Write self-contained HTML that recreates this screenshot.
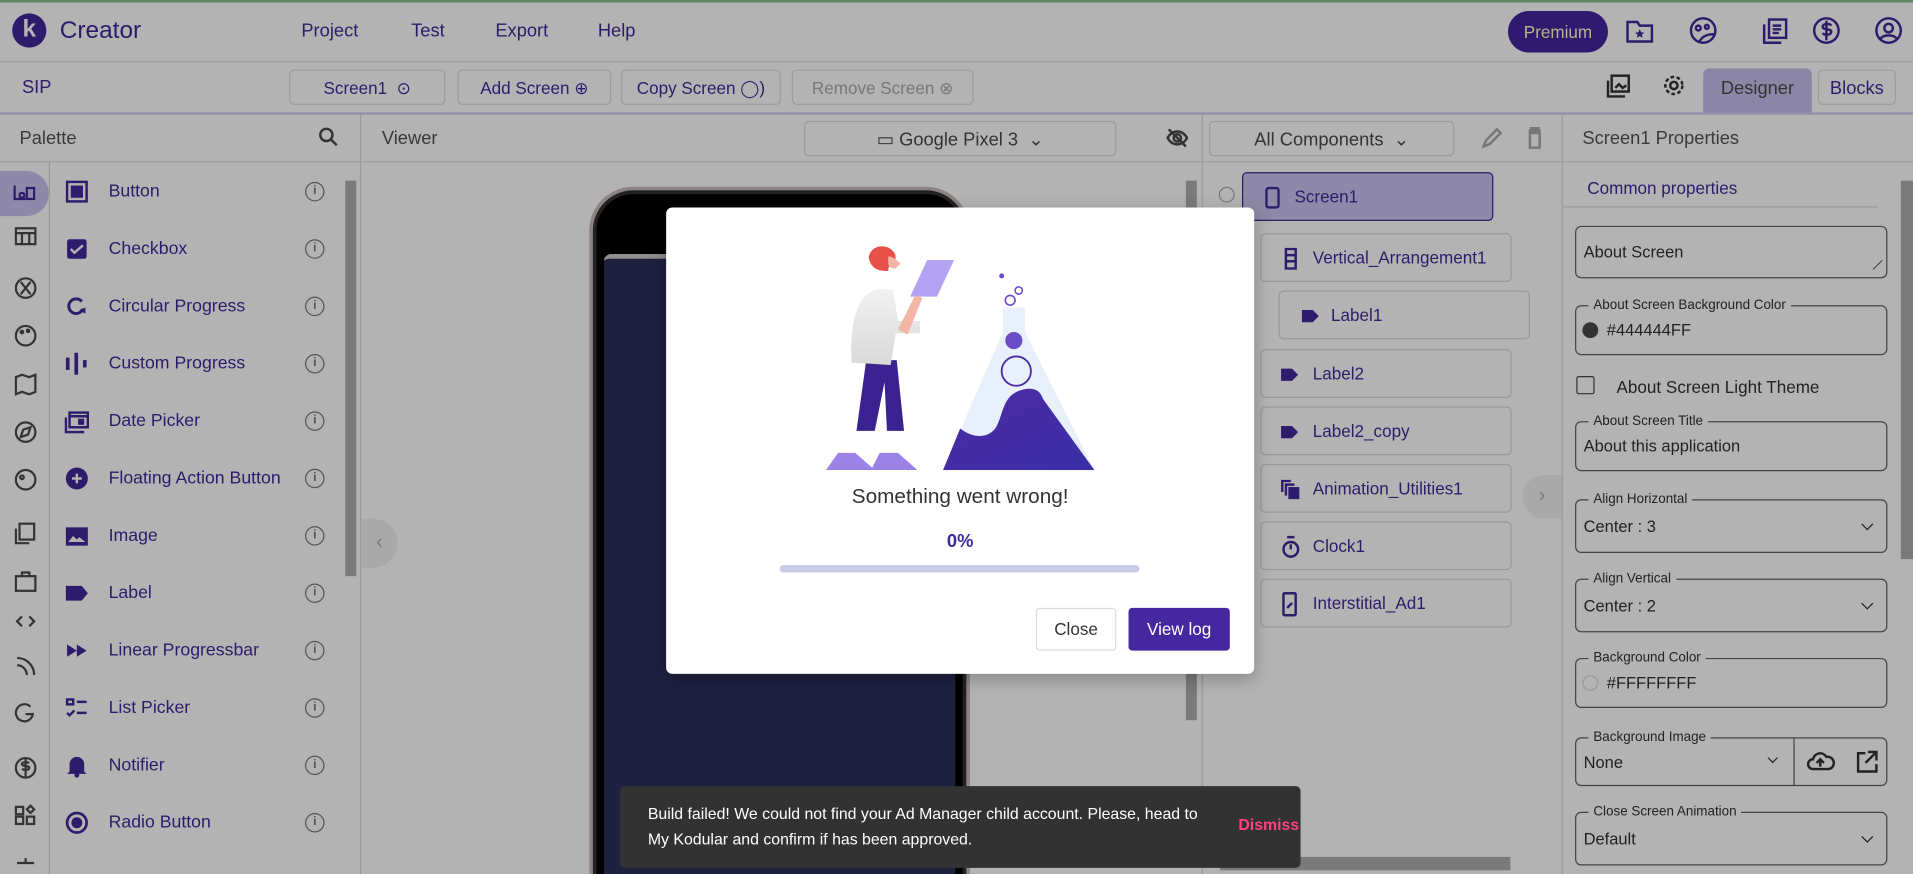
<!DOCTYPE html>
<html><head><meta charset="utf-8">
<style>
*{box-sizing:border-box;margin:0;padding:0}
html,body{width:1913px;height:874px;overflow:hidden;background:#b3b3b3}
#w{position:absolute;left:0;top:0;width:1568px;height:716px;transform:scale(1.22003,1.2207);transform-origin:0 0;background:#b3b3b3;font-family:"Liberation Sans",sans-serif;color:#2d1b6b;overflow:hidden}
.a{position:absolute}
.t{position:absolute;white-space:nowrap}
.p{color:#2d1b6b}
.g{color:#3a3a3a}
.btn{position:absolute;border:1px solid #9c9c9c;border-radius:4px;font-size:14px;text-align:center;line-height:27px}
.item{position:absolute;left:40px;width:243px;height:47px}
.item .ic{position:absolute;left:13px;top:14px;width:20px;height:20px}
.item .l{position:absolute;left:49px;top:16px;font-size:14.5px;color:#2d1b6b}
.item .i{position:absolute;left:210px;top:16px;width:16px;height:16px;border:1.5px solid #555;border-radius:50%;font-size:10px;line-height:13px;text-align:center;color:#555;font-weight:bold}
.comp{position:absolute;height:40px;border:1px solid #999;border-radius:4px;font-size:14px;line-height:38px}
.comp span{position:absolute;left:42px}
.fs{position:absolute;left:1291px;width:256px;border:1px solid #444;border-radius:5px}
.fs .lb{position:absolute;left:10px;top:-8px;background:#b3b3b3;padding:0 4px;font-size:11px;color:#222;line-height:14px}
.fs .v{position:absolute;left:6px;font-size:13.5px;color:#222}
.chev{position:absolute;right:12px;width:7px;height:7px;border-right:1.6px solid #222;border-bottom:1.6px solid #222;transform:rotate(45deg)}
</style></head><body><div id="w">
<div class="a" style="left:0;top:0;width:1568px;height:2px;background:#5b8a5e"></div>
<div class="a" style="left:10px;top:11px;width:28px;height:28px;border-radius:50%;background:#2d1b6b;color:#b3b3b3;font-weight:bold;font-size:20px;text-align:center;line-height:27px">k</div>
<div class="t" style="left:49px;top:14px;font-size:20px;color:#2d1b6b">Creator</div>
<div class="t" style="left:247px;top:17px;font-size:15px">Project</div>
<div class="t" style="left:337px;top:17px;font-size:15px">Test</div>
<div class="t" style="left:406px;top:17px;font-size:15px">Export</div>
<div class="t" style="left:490px;top:17px;font-size:15px">Help</div>
<div class="a" style="left:1236px;top:9px;width:82px;height:34px;border-radius:17px;background:#2e1a6e;color:#b9b48a;font-size:14px;text-align:center;line-height:34px">Premium</div>
<svg class="a" style="left:1330px;top:13px" width="230" height="26" viewBox="0 0 230 26" fill="none" stroke="#2d1b6b" stroke-width="2">
<path d="M4 5h8l2 3h10v13H4z"/><path d="M14 11l1.2 2.5 2.6.2-2 1.7.6 2.6-2.4-1.4-2.4 1.4.6-2.6-2-1.7 2.6-.2z" fill="#2d1b6b" stroke="none"/>
<circle cx="66" cy="12" r="10"/><circle cx="62" cy="10" r="2"/><circle cx="69" cy="9" r="1.6"/><path d="M63 21c2-4 6-6 12-6" />
<rect x="120" y="3" width="14" height="15"/><path d="M116 7v15h14M123 8h7M123 11h7M123 14h5"/>
<circle cx="167" cy="12" r="10"/><path d="M171 8c-1-2-7-2-7 1s7 1 7 4-6 3-7 1M167 4v16"/>
<circle cx="218" cy="12" r="10"/><circle cx="218" cy="10" r="3.5"/><path d="M211 19c3-4 11-4 14 0"/>
</svg>
<div class="a" style="left:0;top:50px;width:1568px;height:1px;background:#9d9d9d"></div>
<div class="t" style="left:18px;top:63px;font-size:15px">SIP</div>
<div class="btn p" style="left:237px;top:57px;width:128px;height:29px;line-height:29px">Screen1 &nbsp;⊙</div>
<div class="btn p" style="left:375px;top:57px;width:126px;height:29px;line-height:29px">Add Screen ⊕</div>
<div class="btn p" style="left:509px;top:57px;width:131px;height:29px;line-height:29px">Copy Screen ◯)</div>
<div class="btn" style="left:649px;top:57px;width:149px;height:29px;line-height:29px;color:#777">Remove Screen ⊗</div>
<svg class="a" style="left:1316px;top:60px" width="70" height="22" fill="none" stroke="#222" stroke-width="2"><rect x="5" y="2" width="14" height="13"/><path d="M2 6v13h14M8 12l3-3 3 3 3-2"/><circle cx="56" cy="10" r="3"/><circle cx="56" cy="10" r="7" stroke-dasharray="3 2"/></svg>
<div class="a" style="left:1396px;top:56px;width:89px;height:37px;background:#8c86a6;border-radius:5px 5px 0 0;font-size:15px;color:#333;text-align:center;line-height:34px">Designer</div>
<div class="btn p" style="left:1490px;top:57px;width:64px;height:29px;font-size:15px;line-height:29px">Blocks</div>
<div class="a" style="left:0;top:92px;width:1568px;height:2px;background:#938eac"></div>
<div class="t g" style="left:16px;top:105px;font-size:15px">Palette</div>
<svg class="a" style="left:261px;top:104px" width="16" height="16" fill="none" stroke="#333" stroke-width="2"><circle cx="6.5" cy="6.5" r="5"/><path d="M10 10l5 5"/></svg>
<div class="a" style="left:295px;top:94px;width:1px;height:622px;background:#999"></div>
<div class="t g" style="left:313px;top:105px;font-size:15px">Viewer</div>
<div class="btn" style="left:659px;top:99px;width:256px;height:29px;line-height:29px;color:#333;font-size:15px">▭ Google Pixel 3 &nbsp;⌄</div>
<svg class="a" style="left:955px;top:103px" width="20" height="20" fill="none" stroke="#333" stroke-width="2"><path d="M2 10c4-7 12-7 16 0-4 7-12 7-16 0z"/><circle cx="10" cy="10" r="3"/><path d="M3 3l14 14"/></svg>
<div class="a" style="left:985px;top:94px;width:1px;height:622px;background:#999"></div>
<div class="btn" style="left:991px;top:99px;width:201px;height:29px;line-height:29px;color:#333;font-size:15px">All Components &nbsp;⌄</div>
<svg class="a" style="left:1213px;top:103px" width="60" height="20" fill="none" stroke="#777" stroke-width="2"><path d="M3 17l2-5 9-9 3 3-9 9z"/><path d="M40 4h10M42 4v-2h6v2M41 6h8v12h-8z"/></svg>
<div class="a" style="left:1280px;top:94px;width:1px;height:622px;background:#999"></div>
<div class="t g" style="left:1297px;top:105px;font-size:15px">Screen1 Properties</div>
<div class="a" style="left:0;top:132px;width:1568px;height:1px;background:#9d9d9d"></div>
<!-- palette sidebar -->
<div class="a" style="left:0;top:140px;width:40px;height:37px;background:#8f89a9;border-radius:0 20px 20px 0"></div>
<svg class="a" style="left:11px;top:151px" width="18" height="14" fill="none" stroke="#2d1b6b" stroke-width="1.8"><path d="M1 1v11h9"/><circle cx="7" cy="9" r="2"/><rect x="11" y="3" width="6" height="9"/></svg>
<div class="a" style="left:40px;top:133px;width:1px;height:583px;background:#999"></div>
<div class="a" style="left:12px;top:179px;font-size:0">
<svg width="18" height="540" fill="none" stroke="#333" stroke-width="1.8">
<rect x="1" y="8" width="16" height="13"/><path d="M1 12h16M6 12v9M12 12v9"/>
<circle cx="9" cy="57" r="8"/><path d="M5 52l8 10M13 52l-8 10"/>
<circle cx="9" cy="96" r="8"/><circle cx="6" cy="93" r="1"/><circle cx="11" cy="92" r="1"/>
<path d="M1 130l5-2 6 2 5-2v14l-5 2-6-2-5 2z"/>
<circle cx="9" cy="175" r="8"/><path d="M5 179l2-6 6-2-2 6z"/>
<circle cx="9" cy="214" r="8"/><circle cx="6" cy="212" r="1.5"/>
<rect x="4" y="250" width="12" height="13"/><path d="M1 254v12h11"/>
<rect x="1" y="293" width="16" height="12"/><path d="M6 293v-3h6v3"/>
<path d="M6 326l-4 4 4 4M12 326l4 4-4 4"/>
<path d="M2 360a14 14 0 0 1 14 14M2 366a8 8 0 0 1 8 8"/>
<path d="M15 405a7 7 0 1 1-2-5M9 406h6"/>
<circle cx="9" cy="450" r="8"/><path d="M12 446c-2-1-6-1-6 1s6 1 6 3-4 2-6 1M9 442v16"/>
<rect x="1" y="482" width="6" height="6"/><rect x="1" y="490" width="6" height="6"/><rect x="10" y="490" width="6" height="6"/><path d="M13 481l3 3-3 3-3-3z"/>
<path d="M2 528h14M9 524v4"/>
</svg></div>
<div class="item" style="top:133px"><svg class="ic" viewBox="0 0 20 20"><rect x="2" y="2" width="16" height="16" fill="none" stroke="#2d1b6b" stroke-width="2"/><rect x="5" y="5" width="10" height="10" fill="#2d1b6b"/></svg><div class="l">Button</div><div class="i">i</div></div>
<div class="item" style="top:180px"><svg class="ic" viewBox="0 0 20 20"><rect x="2" y="2" width="16" height="16" rx="2" fill="#2d1b6b"/><path d="M5 10l3 3 7-6" stroke="#b3b3b3" stroke-width="2" fill="none"/></svg><div class="l">Checkbox</div><div class="i">i</div></div>
<div class="item" style="top:227px"><svg class="ic" viewBox="0 0 20 20"><path d="M15 12a6 6 0 1 1-1-6" fill="none" stroke="#2d1b6b" stroke-width="2.4"/><path d="M12 13l5-2 0 5z" fill="#2d1b6b"/></svg><div class="l">Circular Progress</div><div class="i">i</div></div>
<div class="item" style="top:274px"><svg class="ic" viewBox="0 0 20 20" fill="#2d1b6b"><rect x="1" y="5" width="3" height="10"/><rect x="8" y="1" width="3" height="18"/><rect x="15" y="7" width="3" height="6"/></svg><div class="l">Custom Progress</div><div class="i">i</div></div>
<div class="item" style="top:321px"><svg class="ic" viewBox="0 0 20 20" fill="none" stroke="#2d1b6b" stroke-width="2"><rect x="4" y="3" width="15" height="12"/><path d="M1 7v12h15"/><rect x="12" y="9" width="3" height="3" fill="#2d1b6b"/><path d="M4 6h15"/></svg><div class="l">Date Picker</div><div class="i">i</div></div>
<div class="item" style="top:368px"><svg class="ic" viewBox="0 0 20 20"><circle cx="10" cy="10" r="9" fill="#2d1b6b"/><path d="M10 6v8M6 10h8" stroke="#b3b3b3" stroke-width="2"/></svg><div class="l">Floating Action Button</div><div class="i">i</div></div>
<div class="item" style="top:415px"><svg class="ic" viewBox="0 0 20 20"><rect x="1" y="3" width="18" height="15" fill="#2d1b6b"/><path d="M3 15l4-5 3 3 2-2 5 4z" fill="#b3b3b3"/></svg><div class="l">Image</div><div class="i">i</div></div>
<div class="item" style="top:462px"><svg class="ic" viewBox="0 0 20 20"><path d="M1 4h13l5 6-5 6H1z" fill="#2d1b6b"/></svg><div class="l">Label</div><div class="i">i</div></div>
<div class="item" style="top:509px"><svg class="ic" viewBox="0 0 20 20" fill="#2d1b6b"><path d="M2 5l8 5-8 5zM10 5l8 5-8 5z"/></svg><div class="l">Linear Progressbar</div><div class="i">i</div></div>
<div class="item" style="top:556px"><svg class="ic" viewBox="0 0 20 20" fill="none" stroke="#2d1b6b" stroke-width="2"><rect x="2" y="3" width="5" height="4"/><path d="M10 5h8M2 14l2 2 4-4M10 14h8"/></svg><div class="l">List Picker</div><div class="i">i</div></div>
<div class="item" style="top:603px"><svg class="ic" viewBox="0 0 20 20" fill="#2d1b6b"><path d="M4 15V9a6 6 0 0 1 12 0v6l2 2H2z"/><circle cx="10" cy="18" r="2"/></svg><div class="l">Notifier</div><div class="i">i</div></div>
<div class="item" style="top:650px"><svg class="ic" viewBox="0 0 20 20"><circle cx="10" cy="10" r="8" fill="none" stroke="#2d1b6b" stroke-width="2.2"/><circle cx="10" cy="10" r="4.5" fill="#2d1b6b"/></svg><div class="l">Radio Button</div><div class="i">i</div></div>
<div class="a" style="left:283px;top:148px;width:9px;height:324px;background:#7a7a7a"></div>
<!-- viewer -->
<div class="a" style="left:296px;top:425px;width:30px;height:40px;background:#a9a9a9;border-radius:0 20px 20px 0;color:#777;font-size:16px;line-height:40px;text-align:center">‹</div>
<div class="a" style="left:483px;top:153px;width:312px;height:600px;border-radius:36px;background:#000;border:3px solid #8c8483;box-shadow:inset 0 0 0 3px #222"></div>
<div class="a" style="left:495px;top:208px;width:288px;height:510px;background:#1e2040;border-top:4px solid #8e8e8e;border-radius:6px 6px 0 0"></div>
<div class="a" style="left:972px;top:148px;width:9px;height:442px;background:#7a7a7a"></div>
<!-- components -->
<div class="a" style="left:999px;top:153px;width:13px;height:13px;border:1.4px solid #777;border-radius:50%"></div>
<div class="comp p" style="left:1018px;top:141px;width:206px;background:#8f89a9;border-color:#2d1b6b"><svg class="a" style="left:18px;top:11px" width="12" height="18" fill="none" stroke="#2d1b6b" stroke-width="2"><rect x="1" y="1" width="10" height="16" rx="2"/></svg><span>Screen1</span></div>
<div class="comp p" style="left:1033px;top:191px;width:206px"><svg class="a" style="left:18px;top:11px" width="12" height="18" fill="none" stroke="#2d1b6b" stroke-width="2"><rect x="2" y="1" width="8" height="16"/><path d="M2 6h8M2 11h8"/></svg><span>Vertical_Arrangement1</span></div>
<div class="comp p" style="left:1048px;top:238px;width:206px"><svg class="a" style="left:18px;top:14px" width="14" height="12"><path d="M0 1h9l5 5-5 5H0z" fill="#2d1b6b"/></svg><span>Label1</span></div>
<div class="comp p" style="left:1033px;top:286px;width:206px"><svg class="a" style="left:16px;top:14px" width="14" height="12"><path d="M0 1h9l5 5-5 5H0z" fill="#2d1b6b"/></svg><span>Label2</span></div>
<div class="comp p" style="left:1033px;top:333px;width:206px"><svg class="a" style="left:16px;top:14px" width="14" height="12"><path d="M0 1h9l5 5-5 5H0z" fill="#2d1b6b"/></svg><span>Label2_copy</span></div>
<div class="comp p" style="left:1033px;top:380px;width:206px"><svg class="a" style="left:16px;top:12px" width="16" height="16" fill="#2d1b6b"><path d="M0 0h8v2H2v8H0z"/><path d="M3 3h8v2H5v8H3z"/><rect x="6" y="6" width="9" height="10"/></svg><span>Animation_Utilities1</span></div>
<div class="comp p" style="left:1033px;top:427px;width:206px"><svg class="a" style="left:16px;top:10px" width="16" height="20" fill="none" stroke="#2d1b6b" stroke-width="2"><circle cx="8" cy="12" r="6"/><path d="M5 2h6M8 12V8"/></svg><span>Clock1</span></div>
<div class="comp p" style="left:1033px;top:474px;width:206px"><svg class="a" style="left:16px;top:10px" width="14" height="20" fill="none" stroke="#2d1b6b" stroke-width="2"><rect x="2" y="1" width="10" height="18" rx="1"/><path d="M5 13l4-4"/></svg><span>Interstitial_Ad1</span></div>
<div class="a" style="left:1248px;top:389px;width:32px;height:36px;background:#a9a9a9;border-radius:18px 0 0 18px;color:#777;font-size:16px;line-height:36px;text-align:center">›</div>
<div class="a" style="left:1000px;top:702px;width:238px;height:11px;background:#7a7a7a"></div>
<!-- properties -->
<div class="t p" style="left:1301px;top:146px;font-size:14px">Common properties</div>
<div class="a" style="left:1281px;top:169px;width:258px;height:1px;background:#999"></div>
<div class="a" style="left:1558px;top:148px;width:10px;height:310px;background:#7a7a7a"></div>
<div class="fs" style="top:185px;height:43px"><div class="v" style="top:13px">About Screen</div><div class="a" style="right:3px;bottom:6px;width:8px;height:8px;background:linear-gradient(135deg,transparent 45%,#444 45%,#444 55%,transparent 55%)"></div></div>
<div class="fs" style="top:250px;height:41px"><div class="lb">About Screen Background Color</div><div class="a" style="left:5px;top:13px;width:13px;height:13px;border-radius:50%;background:#333"></div><div class="v" style="left:25px;top:12px">#444444FF</div></div>
<div class="a" style="left:1292px;top:308px;width:15px;height:15px;border:1.6px solid #333;border-radius:2px"></div>
<div class="t" style="left:1325px;top:309px;font-size:14px;color:#222">About Screen Light Theme</div>
<div class="fs" style="top:345px;height:41px"><div class="lb">About Screen Title</div><div class="v" style="top:12px">About this application</div></div>
<div class="fs" style="top:409px;height:44px"><div class="lb">Align Horizontal</div><div class="v" style="top:14px">Center : 3</div><div class="chev" style="top:16px"></div></div>
<div class="fs" style="top:474px;height:44px"><div class="lb">Align Vertical</div><div class="v" style="top:14px">Center : 2</div><div class="chev" style="top:16px"></div></div>
<div class="fs" style="top:539px;height:41px"><div class="lb">Background Color</div><div class="a" style="left:5px;top:13px;width:13px;height:13px;border-radius:50%;border:1px solid #999"></div><div class="v" style="left:25px;top:12px">#FFFFFFFF</div></div>
<div class="fs" style="top:604px;height:40px"><div class="lb">Background Image</div><div class="v" style="top:12px">None</div><div class="chev" style="right:90px;top:13px;width:6px;height:6px;border-width:1.3px"></div><div class="a" style="left:178px;top:0;width:1px;height:39px;background:#444"></div>
<svg class="a" style="left:189px;top:9px" width="70" height="20" fill="none" stroke="#222" stroke-width="2"><path d="M5 16a4 4 0 0 1 0-8 6 6 0 0 1 11-2 4 4 0 0 1 2 10z"/><path d="M11 14V9M8 11l3-3 3 3"/><path d="M48 3h-6v15h15v-6M50 2h7v7M57 2l-9 9"/></svg></div>
<div class="fs" style="top:665px;height:44px"><div class="lb">Close Screen Animation</div><div class="v" style="top:14px">Default</div><div class="chev" style="top:16px"></div></div>
<!-- modal -->
<div class="a" style="left:546px;top:170px;width:482px;height:382px;background:#fff;border-radius:5px;box-shadow:0 4px 14px rgba(0,0,0,.25)"></div>
<svg class="a" style="left:672px;top:185px" width="230" height="205" viewBox="0 0 230 205">
<defs><linearGradient id="f" x1="0" y1="0" x2="1" y2="1"><stop offset="0" stop-color="#4d2aa3"/><stop offset="1" stop-color="#3a2fa8"/></linearGradient>
<linearGradient id="c" x1="0" y1="0" x2="0" y2="1"><stop offset="0" stop-color="#f2f2f2"/><stop offset="1" stop-color="#d8d8d8"/></linearGradient></defs>
<path d="M150 67h18v20l57 113H101l49-113z" fill="#e8f0fc"/>
<path d="M101 200l14-34c10 8 24 9 30-2 6-12 5-26 22-30 10-2 14 2 16 8l42 58z" fill="url(#f)"/>
<circle cx="159" cy="94" r="7" fill="#6a4cc7"/><circle cx="161" cy="119" r="12" fill="none" stroke="#4d2aa3" stroke-width="1.5"/>
<circle cx="149" cy="41" r="2" fill="#6a4cc7"/><circle cx="163" cy="53" r="3" fill="none" stroke="#6a4cc7" stroke-width="1.3"/><circle cx="156" cy="61" r="4" fill="none" stroke="#6a4cc7" stroke-width="1.3"/>
<path d="M30 168l8-58h25l6 58-14 0-2-40-8 40z" fill="#3a2290"/>
<path d="M26 112c-2-40 8-60 24-60h10l4 26h18v10H62v2l-4 24z" fill="url(#c)"/>
<path d="M5 200l10-14h14l16 14zM42 200l7-14h15l16 14z" fill="#9a82e6"/>
<path d="M40 26c2-12 18-12 22-2l0 6c-4 0-6 3-6 7-10 0-14-3-16-11z" fill="#e8504a"/>
<path d="M56 25c4 0 8 4 10 6l-4 4c-4 0-6-2-6-4z" fill="#f2b6a6"/>
<path d="M74 58l14-30 22 0-14 30z" fill="#b3a3f2"/>
<path d="M64 85l14-28 6 2-12 30z" fill="#f2b6a6"/>
</svg>
<div class="t" style="left:546px;width:482px;text-align:center;top:397px;font-size:17px;color:#333">Something went wrong!</div>
<div class="t" style="left:546px;width:482px;text-align:center;top:435px;font-size:15px;color:#3d2a9a;font-weight:bold">0%</div>
<div class="a" style="left:639px;top:463px;width:295px;height:6px;border-radius:3px;background:#c8cae8"></div>
<div class="a" style="left:849px;top:498px;width:66px;height:35px;border:1px solid #ddd;border-radius:3px;font-size:14px;color:#333;text-align:center;line-height:33px">Close</div>
<div class="a" style="left:925px;top:498px;width:83px;height:35px;background:#4527a0;border-radius:3px;font-size:14px;color:#fff;text-align:center;line-height:35px">View log</div>
<!-- toast -->
<div class="a" style="left:508px;top:644px;width:558px;height:67px;background:#323232;border-radius:4px"></div>
<div class="a" style="left:531px;top:656px;width:460px;font-size:13px;line-height:21px;color:#fff">Build failed! We could not find your Ad Manager child account. Please, head to My Kodular and confirm if has been approved.</div>
<div class="t" style="left:1015px;top:668px;font-size:13px;color:#ff4081;font-weight:bold">Dismiss</div>
</div></body></html>
